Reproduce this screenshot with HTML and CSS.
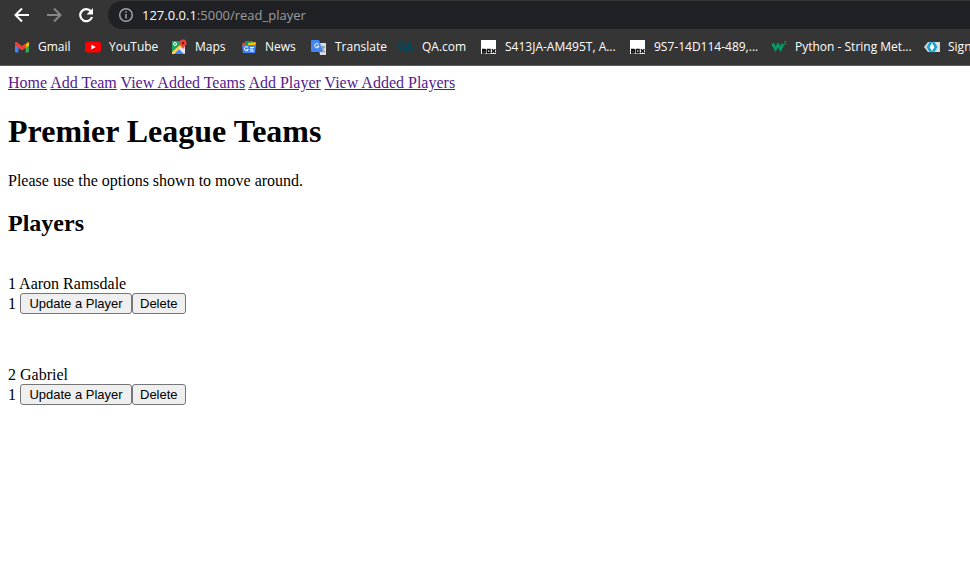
FILE: index.html
```html
<!DOCTYPE html>
<html lang="en">
<head>
<meta charset="utf-8">
<title>Players</title>
<link rel="stylesheet" href="styles.css">
</head>
<body>
<header class="browser">
  <div class="toolbar">
    <button class="tool" type="button" aria-label="Back"><svg width="16" height="16" viewBox="0 0 16 16" fill="none" stroke="#fff" stroke-width="2"><path d="M15 8H2M8 1.500 1.500 8 8 14.500"/></svg></button>
    <button class="tool" type="button" aria-label="Forward"><svg width="16" height="16" viewBox="0 0 16 16" fill="none" stroke="#868686" stroke-width="2"><path d="M1 8h13M8 1.500 14.500 8 8 14.500"/></svg></button>
    <button class="tool" type="button" aria-label="Reload"><svg width="16" height="16" viewBox="0 0 16 16"><path d="M13 4.500A6 6 0 1 0 14 10" fill="none" stroke="#fff" stroke-width="2.200"/><path d="M15 1v6.500H8.500z" fill="#fff"/></svg></button>
    <div class="address">
      <svg width="16" height="16" viewBox="0 0 16 16" fill="none" stroke="#a0a4a8" stroke-width="1.500"><circle cx="8" cy="8" r="6.300"/><path d="M8 7v4.500M8 4.200v1.600"/></svg>
      <span class="url"><span class="host">127.0.0.1</span>:5000/read_player</span>
    </div>
  </div>
  <nav class="bookmarks" aria-label="Bookmarks">
    <a href="#"><svg width="16" height="16" viewBox="0 0 16 16"><path d="M1 5v7.500q0 1 1 1h2.500V7z" fill="#4285f4"/><path d="M15 5v7.500q0 1-1 1h-2.500V7z" fill="#34a853"/><path d="M11.500 5.500 14 3q1 0 1 1v2.500L11.500 9z" fill="#fbbc04"/><path d="M1 6.500V4q0-1.500 1.700-1L8 7l3.500-2.700V9L8 11.500 4.500 9z" fill="#ea4335"/></svg><span>Gmail</span></a>
    <a href="#"><svg width="16" height="16" viewBox="0 0 16 16"><rect y="2.500" width="16" height="11" rx="3" fill="#f00"/><path d="m6.300 5.500 4.500 2.500-4.500 2.500z" fill="#fff"/></svg><span>YouTube</span></a>
    <a href="#"><svg width="16" height="16" viewBox="0 0 16 16"><rect x="1" y="2" width="13" height="13" rx="1" fill="#e8eaed"/><path d="M1 3q0-1 1-1h9v3L1 14z" fill="#1fa463"/><path d="m3 15 5-5 5 5z" fill="#4285f4"/><path d="m1 13 9-8 1.500 2L3 15H1z" fill="#ffd04b"/><circle cx="4" cy="5" r="1.500" fill="none" stroke="#fff"/><path d="M12 11c0-3-3.500-4-3.500-7a3.500 3.500 0 0 1 7 0c0 3-3.500 4-3.500 7z" fill="#ea4335"/><circle cx="12" cy="4" r="1.200" fill="#811411"/></svg><span>Maps</span></a>
    <a href="#"><svg width="16" height="16" viewBox="0 0 16 16"><path d="m1 4 7-1v5H2z" fill="#ea4335"/><path d="M4 2h8v7H4z" fill="#0c9d58"/><path d="m7 4 8-1-1 6H7z" fill="#ffc107"/><path d="M1 6h14l-1 8H2z" fill="#4285f4"/><path d="M7 8.500a2 2 0 1 0 .3 2H5.500M9 8.500h4M9 10.200h3M9 12h4" fill="none" stroke="#fff"/></svg><span>News</span></a>
    <a href="#"><svg width="16" height="16" viewBox="0 0 16 16"><path d="M7 4h8v12H9z" fill="#dadce0"/><path d="M9 8h5M11.500 7v1M13 8q-1 3-4 5M10 9q1 3 4 4" fill="none" stroke="#757f89"/><path d="M1 1h7l4 12H1q-1 0-1-1V2q0-1 1-1z" fill="#4285f4"/><path d="M7.500 5.200a2.200 2.200 0 1 0 .5 2H5.500" fill="none" stroke="#fff"/></svg><span>Translate</span></a>
    <a href="#"><svg width="16" height="16" viewBox="0 0 16 16" fill="none" stroke="#06475a" stroke-width="2"><circle cx="4" cy="7" r="3"/><path d="m4 8 4 4.500L11.500 4l3.500 8.500M10 10h4"/></svg><span>QA.com</span></a>
    <a href="#"><svg width="16" height="16" viewBox="0 0 16 16"><path d="M0 1h15v14H0z" fill="#fff"/><path d="M1.800 10v4.200M1 10.500h3l.6.700-.8.900.8.900-.6.900H1M2 12.100h2M6.500 10.500h2.500v3.300H6.500zM10.800 10.200l3.600 3.900M14.400 10.200l-3.600 3.900" fill="none" stroke="#111" stroke-width="1.500"/></svg><span>S413JA-AM495T, A...</span></a>
    <a href="#"><svg width="16" height="16" viewBox="0 0 16 16"><path d="M0 1h15v14H0z" fill="#fff"/><path d="M1.800 10v4.200M1 10.500h3l.6.700-.8.900.8.900-.6.900H1M2 12.100h2M6.500 10.500h2.500v3.300H6.500zM10.800 10.200l3.600 3.900M14.400 10.200l-3.600 3.900" fill="none" stroke="#111" stroke-width="1.500"/></svg><span>9S7-14D114-489,...</span></a>
    <a href="#"><svg width="16" height="16" viewBox="0 0 16 16" fill="none" stroke="#059862"><path d="m1.500 4.500 3 5.500 2.500-4 2.500 4 2.500-5" stroke-width="3"/><path d="M13 2.500h2l-1.200 1.300q1.500.3.800 1.500-.7.700-1.800.200"/></svg><span>Python - String Met...</span></a>
    <a href="#"><svg width="16" height="16" viewBox="0 0 16 16"><path d="M4 3h4v10H4L0 8z" fill="#d8dde0"/><path d="M8 3h8v10H8z" fill="#d8dde0"/><path d="m7 3-3 5 3 5M9 3l3 5-3 5" fill="none" stroke="#12a5d0" stroke-width="2.500"/><path d="m8 4.500 2 3.500-2 3.500L6 8z" fill="#fff"/></svg><span>Sign in</span></a>
  </nav>
</header>
<main class="page">
  <nav class="links"><a href="#">Home</a> <a href="#">Add Team</a> <a href="#">View Added Teams</a> <a href="#">Add Player</a> <a href="#">View Added Players</a></nav>
  <h1>Premier League Teams</h1>
  <p>Please use the options shown to move around.</p>
  <h2>Players</h2>
  <div class="players">
    <section>
      <div>1 Aaron Ramsdale</div>
      <div class="actions"><span>1</span><button class="update" type="button">Update a Player</button><button type="button">Delete</button></div>
    </section>
    <section>
      <div>2 Gabriel</div>
      <div class="actions"><span>1</span><button class="update" type="button">Update a Player</button><button type="button">Delete</button></div>
    </section>
  </div>
</main>
</body>
</html>
```
FILE: styles.css
```css
body {
  margin: 0;
  background: #fff;
  color: #000;
  font: 16px/18px "Liberation Serif", "Times New Roman", serif;
}
.browser {
  overflow: hidden;
  background: #353535;
  border-bottom: 1px solid #5c5c5c;
  color: #fff;
  font-family: "Open Sans", sans-serif;
}
.browser svg { display: block; flex: none; }
.toolbar {
  display: flex;
  align-items: center;
  height: 30px;
  padding-left: 14px;
}
.tool {
  margin: 0 16px 0 0;
  padding: 0;
  border: 0;
  background: none;
}
.address {
  display: flex;
  flex: 1;
  align-items: center;
  gap: 8px;
  height: 28px;
  margin-left: -2px;
  padding-left: 10px;
  border-radius: 14px 0 0 14px;
  background: #202124;
}
.url { color: #9a9da0; font-size: 13px; }
.host { color: #fff; }
.bookmarks {
  display: grid;
  grid-template-columns: 71px 86px 70px 70px 87px 83px 149px 141px 153px 80px;
  align-items: center;
  height: 33px;
  padding: 0 0 2px 14px;
}
.bookmarks a {
  display: flex;
  align-items: center;
  gap: 8px;
  color: #fff;
  font-size: 12px;
  text-decoration: none;
  white-space: nowrap;
}
.page { padding: 8px; }
.links a { color: #551a8b; }
h1 { margin: 21px 0 22px; font-size: 32px; line-height: 37px; }
p { margin: 0; }
h2 { margin: 20px 0 38px; font-size: 24px; line-height: 27px; }
.players { display: grid; gap: 52px; }
.actions { display: flex; align-items: center; }
.actions span { margin-right: 4px; }
.actions button {
  height: 21px;
  margin: 0;
  padding: 0 7px;
  border: 1px solid #767676;
  border-radius: 3px;
  background: #efefef;
  color: #000;
  font: 13px "Liberation Sans", Arial, sans-serif;
}
.actions .update { min-width: 112px; }
```
